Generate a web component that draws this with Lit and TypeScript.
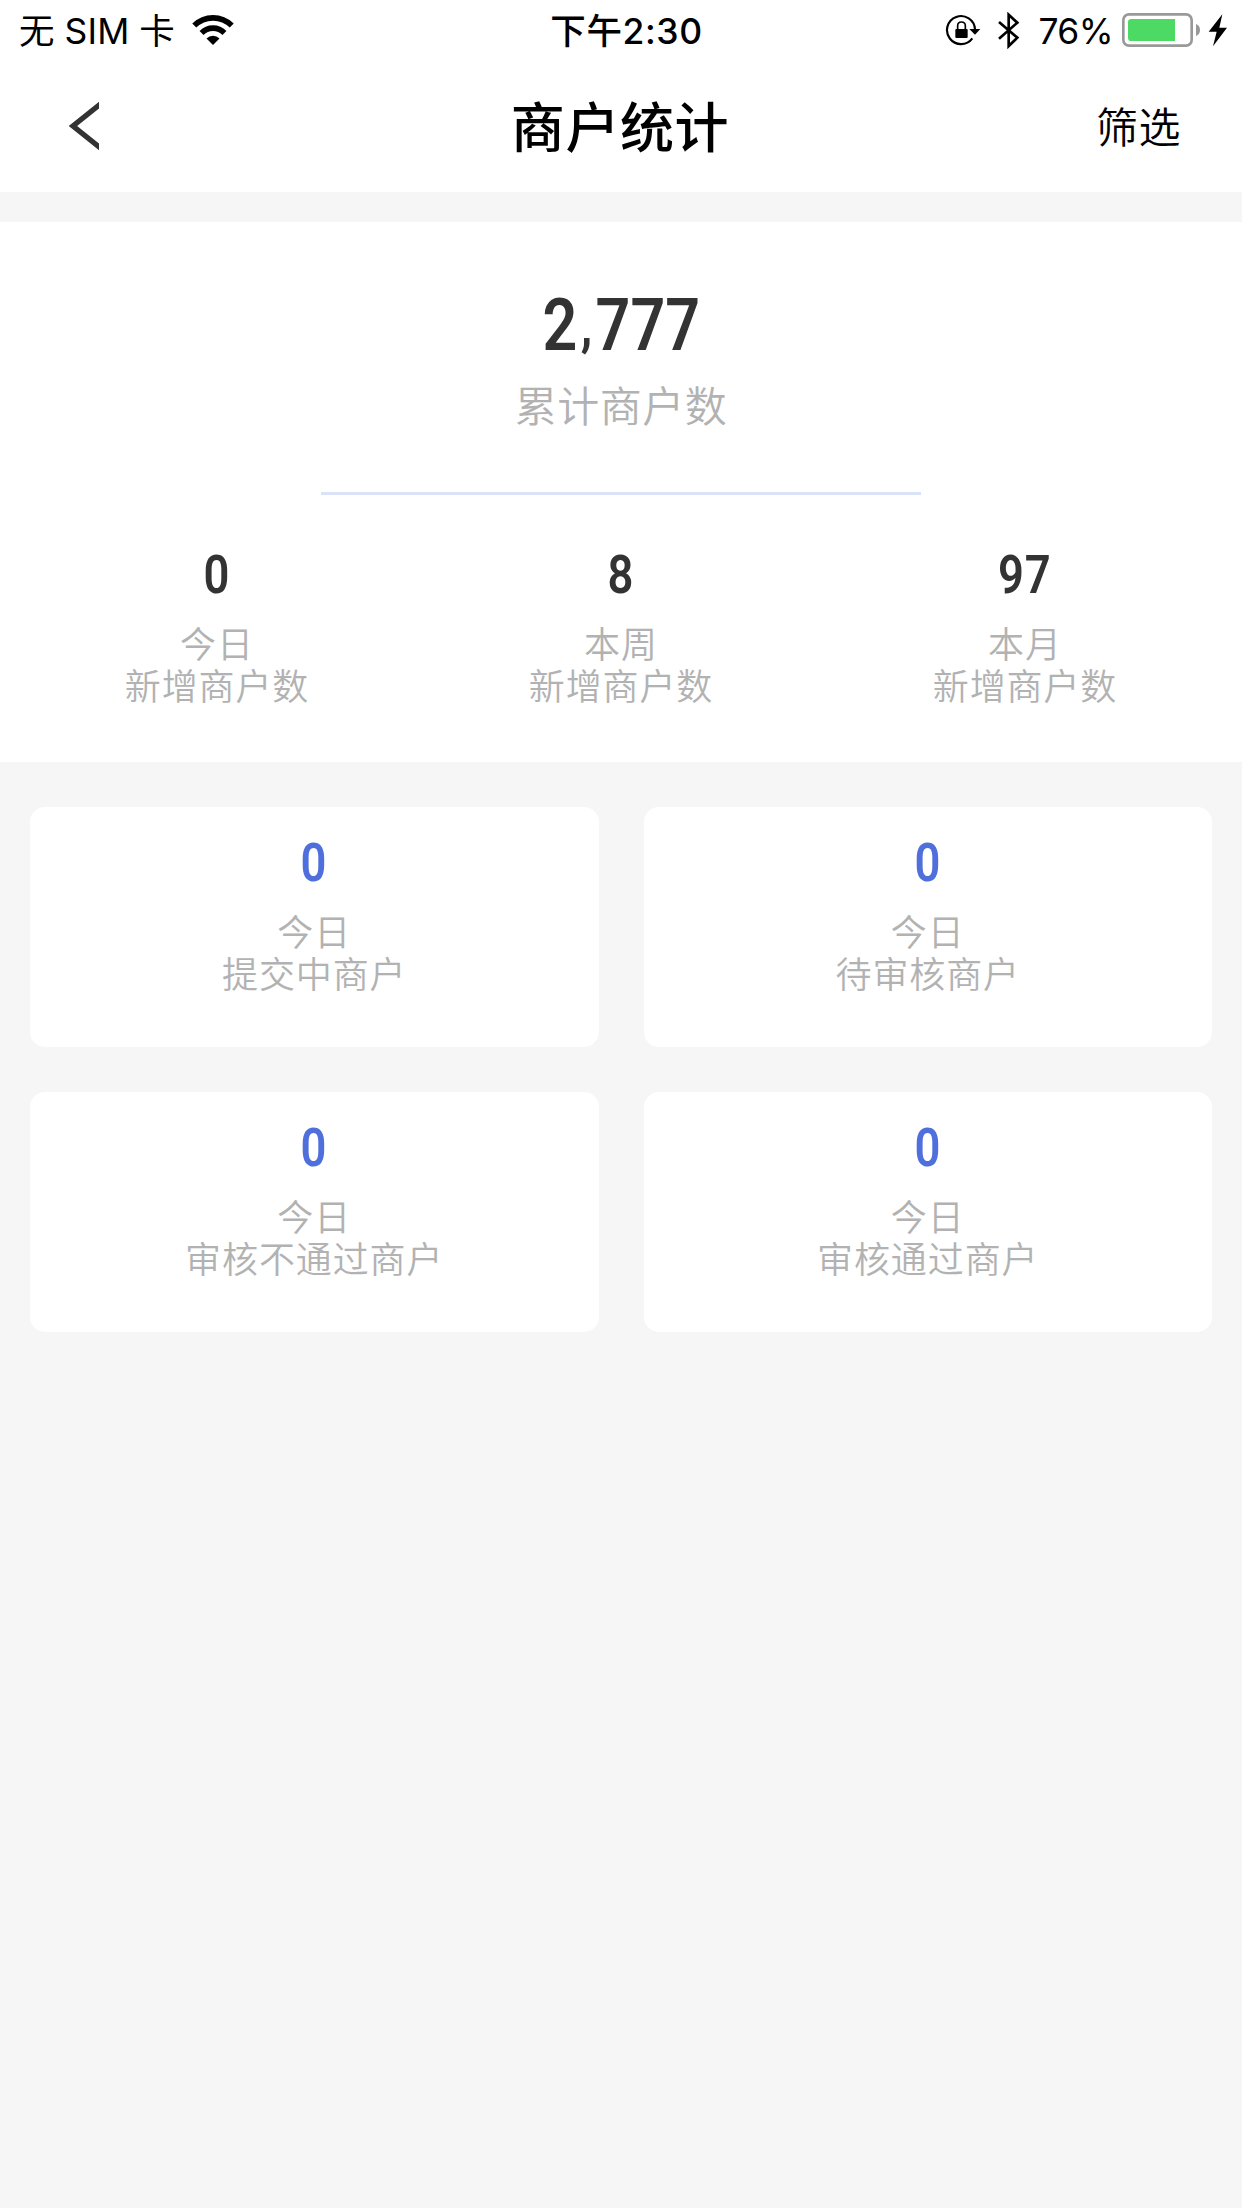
import { LitElement, html, css } from "lit";
import { customElement, property } from "lit/decorators.js";

const cjk = css`Inter, "Noto Sans CJK SC", sans-serif`;

@customElement("status-bar")
class StatusBar extends LitElement {
  static styles = css`
    :host { display: block; }
    .bar {
      display: grid;
      grid-template-columns: 1fr auto 1fr;
      height: 60px;
      line-height: 60px;
      font-family: ${cjk};
      font-size: 35.5px;
      color: #000;
      white-space: nowrap;
    }
    .left, .right { display: flex; align-items: flex-start; }
    .left { padding-left: 19px; }
    .right { justify-content: flex-end; padding-right: 14px; }
    .time, .carrier, .pct { padding-top: 2px; }
    .time { font-weight: 500; letter-spacing: 0.6px; padding-left: 11px; }
    .carrier { font-weight: 380; letter-spacing: 0.2px; word-spacing: -0.4px; }
    .wifi { margin: 13px 0 0 16px; }
    .lock { margin-top: 13px; }
    .bt { margin: 12px 0 0 15px; }
    .pct { font-weight: 400; margin-left: 18px; letter-spacing: -0.6px; }
    .battery { margin: 13px 0 0 9px; }
    .bolt { margin: 14px 0 0 7px; }
    svg { display: block; flex: none; }
  `;
  render() {
    return html`
      <div class="bar">
        <div class="left">
          <span class="carrier">无 SIM 卡</span>
          <svg class="wifi" width="44" height="34" viewBox="573 39 132 102">
            <path d="M639 135L619.5 115.5A27.5 27.5 0 0 1 658.5 115.5Z" />
            <g fill="none" stroke="#000" stroke-width="17">
              <path d="M604.7 98.7A48.5 48.5 0 0 1 673.3 98.7" />
              <path d="M582.8 76.8A79.5 79.5 0 0 1 695.2 76.8" />
            </g>
          </svg>
        </div>
        <span class="time">下午2:30</span>
        <div class="right">
          <svg class="lock" width="37" height="34" viewBox="77 39 111 102">
            <path d="M159 115A42 42 0 1 1 167 88" fill="none" stroke="#000" stroke-width="6.5" />
            <path d="M150 87H183L167 104Z" />
            <rect x="108" y="87" width="37" height="27" rx="3" />
            <path d="M115 88V77Q115 66 126 66Q138 66 138 77V88" fill="none" stroke="#000" stroke-width="5" />
          </svg>
          <svg class="bt" width="23" height="38" viewBox="234 36 69 114">
            <path d="M240 66L295 113L269 138V44L295 68L240 116" fill="none" stroke="#000" stroke-width="8" />
          </svg>
          <span class="pct">76%</span>
          <svg class="battery" width="79" height="34" viewBox="606 39 237 102">
            <rect x="610" y="43" width="205" height="94" rx="17" fill="none" stroke="#999" stroke-width="8" />
            <path d="M765 57V123H634Q624 123 624 113V67Q624 57 634 57Z" fill="#4cd964" />
            <path d="M828 72Q840 77 840 90Q840 103 828 108Z" fill="#999" />
          </svg>
          <svg class="bolt" width="20" height="34" viewBox="864 42 60 102">
            <path d="M907 43L866 95H890L879 139L921 83H898Z" />
          </svg>
        </div>
      </div>
    `;
  }
}

@customElement("nav-bar")
class NavBar extends LitElement {
  static styles = css`
    :host { display: block; }
    .nav {
      display: grid;
      grid-template-columns: 1fr auto 1fr;
      align-items: center;
      height: 132px;
      font-family: ${cjk};
      color: #000;
    }
    .back { display: block; margin-left: 69px; }
    .title { font-size: 54px; font-weight: 500; letter-spacing: 0.6px; line-height: 80px; padding-top: 5px; margin-left: -2px; }
    .filter { font-size: 42px; font-weight: 350; letter-spacing: 0.5px; line-height: 60px; text-align: right; padding: 3px 61px 0 0; }
  `;
  render() {
    return html`
      <div class="nav">
        <svg class="back" width="30" height="48" viewBox="0 0 90 144">
          <path d="M97 4L12 72L97 140" fill="none" stroke="#333" stroke-width="16" />
        </svg>
        <span class="title">商户统计</span>
        <span class="filter">筛选</span>
      </div>
    `;
  }
}

@customElement("stat-item")
class StatItem extends LitElement {
  @property() value = "";
  @property() period = "";
  @property() label = "";
  static styles = css`
    :host { display: block; }
    .stat { display: flex; flex-direction: column; align-items: center; white-space: nowrap; }
    .value {
      font: 600 54px/60px Roboto, sans-serif;
      color: var(--value-color, #333);
      transform: scaleX(0.84);
      letter-spacing: 1px;
    }
    .caption {
      margin-top: 20px;
      font-family: "Liberation Sans", "Noto Sans CJK SC", sans-serif;
      font-weight: 350;
      font-size: 36px;
      letter-spacing: 0.9px;
      color: #b2b2b2;
      text-align: center;
    }
    .line { height: 42px; line-height: 42px; }
  `;
  render() {
    return html`
      <div class="stat">
        <div class="value">${this.value}</div>
        <div class="caption">
          <div class="line">${this.period}</div>
          <div class="line">${this.label}</div>
        </div>
      </div>
    `;
  }
}

@customElement("app-root")
class AppRoot extends LitElement {
  static styles = css`
    :host { display: block; }
    .page { min-height: 2208px; background: #f6f6f6; }
    .header { background: #fff; }
    .summary {
      display: flex;
      flex-direction: column;
      align-items: center;
      box-sizing: border-box;
      height: 540px;
      margin-top: 30px;
      padding-top: 61px;
      background: #fff;
    }
    .total { font: 600 73px/84px Roboto, sans-serif; color: #333; transform: scaleX(0.835); white-space: nowrap; }
    .comma { font-size: 56px; font-weight: 700; line-height: 0; padding: 0 4px; vertical-align: 5px; }
    .total-label {
      margin-top: 7px;
      font-family: "Noto Sans CJK SC", sans-serif;
      font-weight: 350;
      font-size: 42px;
      line-height: 60px;
      letter-spacing: 0.5px;
      color: #b2b2b2;
    }
    .rule { width: 600px; height: 3px; margin-top: 58px; background: #dbe3f8; }
    .periods { display: grid; grid-template-columns: repeat(3, 404px); margin-top: 50px; }
    .cards { display: grid; grid-template-columns: 1fr 1fr; gap: 45px; padding: 45px 30px; }
    .card {
      box-sizing: border-box;
      height: 240px;
      padding-top: 26px;
      border-radius: 15px;
      background: #fff;
      --value-color: #4f6fdc;
    }
  `;

  periods = [
    { value: "0", period: "今日", label: "新增商户数" },
    { value: "8", period: "本周", label: "新增商户数" },
    { value: "97", period: "本月", label: "新增商户数" },
  ];

  cards = [
    { value: "0", period: "今日", label: "提交中商户" },
    { value: "0", period: "今日", label: "待审核商户" },
    { value: "0", period: "今日", label: "审核不通过商户" },
    { value: "0", period: "今日", label: "审核通过商户" },
  ];

  render() {
    return html`
      <div class="page">
        <div class="header">
          <status-bar></status-bar>
          <nav-bar></nav-bar>
        </div>
        <div class="summary">
          <div class="total">2<span class="comma">,</span>777</div>
          <div class="total-label">累计商户数</div>
          <div class="rule"></div>
          <div class="periods">
            ${this.periods.map((s) => html`<stat-item .value=${s.value} .period=${s.period} .label=${s.label}></stat-item>`)}
          </div>
        </div>
        <div class="cards">
          ${this.cards.map(
            (s) => html`<div class="card"><stat-item .value=${s.value} .period=${s.period} .label=${s.label}></stat-item></div>`
          )}
        </div>
      </div>
    `;
  }
}
